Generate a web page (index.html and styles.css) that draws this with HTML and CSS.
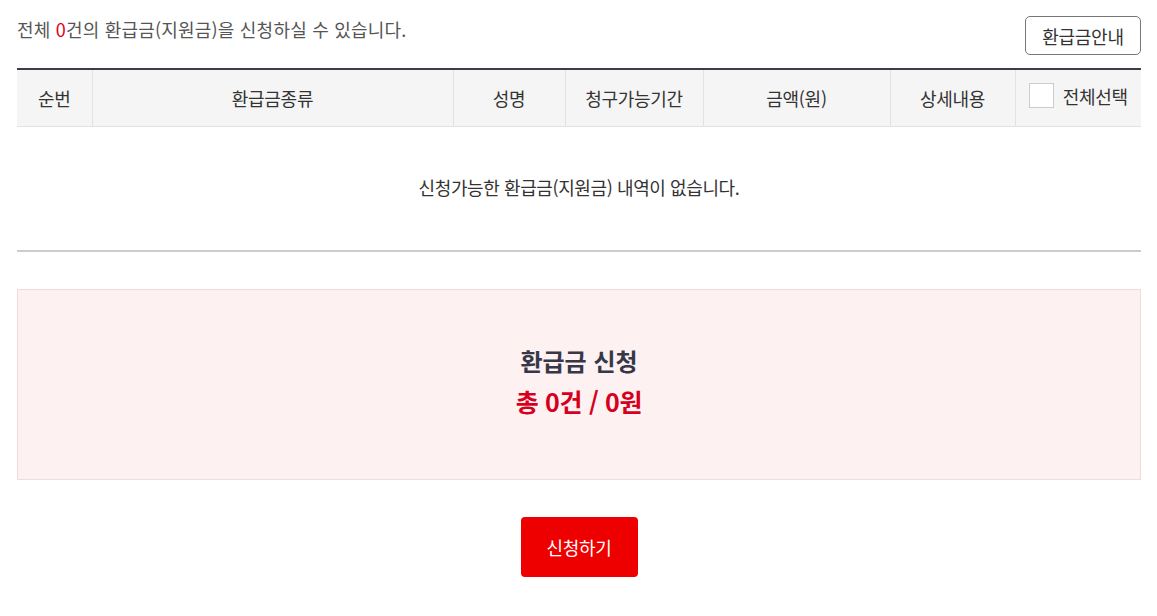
FILE: index.html
```html
<!DOCTYPE html>
<html lang="ko">
<head>
<meta charset="utf-8">
<link rel="stylesheet" href="styles.css">
</head>
<body>
<div class="wrap">
  <div class="top">
    <p class="summary">전체 <span class="red">0</span>건의 환급금(지원금)을 신청하실 수 있습니다.</p>
    <button class="guide-btn" type="button">환급금안내</button>
  </div>
  <table class="list">
    <colgroup>
      <col class="c1"><col class="c2"><col class="c3"><col class="c4"><col class="c5"><col class="c6"><col class="c7">
    </colgroup>
    <thead>
      <tr>
        <th>순번</th>
        <th>환급금종류</th>
        <th>성명</th>
        <th>청구가능기간</th>
        <th>금액(원)</th>
        <th>상세내용</th>
        <th class="chk-cell"><label class="chk"><span class="box"></span>전체선택</label></th>
      </tr>
    </thead>
    <tbody>
      <tr><td colspan="7" class="empty">신청가능한 환급금(지원금) 내역이 없습니다.</td></tr>
    </tbody>
  </table>
  <div class="total-box">
    <div class="total-title">환급금 신청</div>
    <div class="total-sum">총 0건 / 0원</div>
  </div>
  <div class="actions">
    <button class="apply-btn" type="button">신청하기</button>
  </div>
</div>
</body>
</html>
```
FILE: styles.css
```css
html, body {
  margin: 0;
  padding: 0;
  background: #fff;
}
body {
  font-family: "Noto Sans CJK KR", "Noto Sans", sans-serif;
  color: #333;
}
.wrap {
  width: 1124px;
  margin-left: 17px;
}
.top {
  display: flex;
  justify-content: space-between;
  align-items: flex-start;
  height: 68px;
}
.summary {
  margin: 16px 0 0;
  font-size: 18px;
  line-height: 26px;
  color: #555;
  letter-spacing: 0.2px;
}
.red { color: #e0001a; }
.guide-btn {
  margin-top: 16px;
  width: 116px;
  height: 39px;
  border: 1px solid #777;
  border-radius: 5px;
  background: #fff;
  font-family: inherit;
  font-size: 18px;
  color: #333;
  letter-spacing: -0.3px;
  padding: 0;
}
.list {
  width: 100%;
  border-collapse: collapse;
  table-layout: fixed;
  border-top: 2px solid #3b3d4a;
}
.c1 { width: 75px; }
.c2 { width: 361px; }
.c3 { width: 112px; }
.c4 { width: 138px; }
.c5 { width: 187px; }
.c6 { width: 125px; }
.c7 { width: 126px; }
.list th {
  height: 56px;
  padding: 0;
  background: #f5f5f5;
  border-bottom: 1px solid #e2e2e2;
  border-left: 1px solid #e2e2e2;
  font-weight: 400;
  font-size: 18px;
  color: #333;
  letter-spacing: -0.3px;
}
.list th:first-child { border-left: 0; }
.chk {
  display: inline-flex;
  align-items: center;
  gap: 9px;
}
.box {
  width: 23px;
  height: 23px;
  border: 1px solid #ccc;
  background: #fff;
}
.empty {
  height: 119px;
  padding: 0 0 4px;
  text-align: center;
  font-size: 18px;
  color: #333;
  letter-spacing: -0.4px;
  border-bottom: 2px solid #ccc;
}
.total-box {
  margin-top: 37px;
  height: 191px;
  background: #fef1f1;
  border: 1px solid #f0dcdc;
  display: flex;
  flex-direction: column;
  align-items: center;
  justify-content: center;
  padding-bottom: 8px;
  box-sizing: border-box;
}
.total-title {
  font-size: 24px;
  font-weight: 700;
  color: #363848;
  line-height: 40px;
}
.total-sum {
  font-size: 25px;
  font-weight: 700;
  color: #d5001e;
  line-height: 40px;
  letter-spacing: -0.3px;
}
.actions {
  display: flex;
  justify-content: center;
  margin-top: 37px;
}
.apply-btn {
  width: 117px;
  height: 60px;
  border: 0;
  border-radius: 4px;
  background: #ee0000;
  color: #fff;
  font-family: inherit;
  font-size: 18px;
  letter-spacing: -0.3px;
  padding: 0;
}
```
